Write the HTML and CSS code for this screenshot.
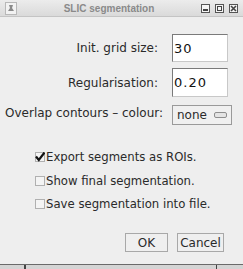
FILE: index.html
```html
<!DOCTYPE html>
<html lang="en">
<head>
<meta charset="UTF-8">
<title>SLIC segmentation</title>
<link rel="stylesheet" href="styles.css">
</head>
<body>

<div class="window">
  <div class="titlebar">
    <div class="app-icon">
      <svg width="10" height="10" viewBox="0 0 10 10">
        <path d="M3 2 L7 2 L6 5 L8 8 L2 8 L4 5 Z" fill="#8a8a8a"/>
      </svg>
    </div>
    <div class="title">SLIC segmentation</div>
    <div class="win-btns">
      <span class="win-btn"><svg width="9" height="9" viewBox="0 0 9 9"><rect x="0.5" y="0.5" width="8" height="8" fill="#f4f4f4" stroke="#555"/><rect x="2" y="5" width="5" height="2" fill="#444"/></svg></span>
      <span class="win-btn"><svg width="9" height="9" viewBox="0 0 9 9"><rect x="0.5" y="0.5" width="8" height="8" fill="#f4f4f4" stroke="#555"/><rect x="2.5" y="2.5" width="4" height="4" fill="none" stroke="#444"/></svg></span>
      <span class="win-btn"><svg width="9" height="9" viewBox="0 0 9 9"><rect x="0.5" y="0.5" width="8" height="8" fill="#f4f4f4" stroke="#555"/><path d="M2 2 L7 7 M7 2 L2 7" stroke="#444" stroke-width="1.6"/></svg></span>
    </div>
  </div>

  <div class="content">
    <div class="form">
      <label class="lbl pad">Init. grid size:</label>
      <div class="field">30</div>
      <label class="lbl pad">Regularisation:</label>
      <div class="field">0.20</div>
      <label class="lbl">Overlap contours &ndash; colour:</label>
      <div class="combo"><span>none</span><span class="combo-knob"></span></div>
    </div>

    <div class="checks">
      <div class="check"><span class="box">
        <svg width="10" height="10" viewBox="0 0 10 10"><path d="M1 4.5 L3.8 8 L9.5 0.5" fill="none" stroke="#111" stroke-width="2.2"/></svg>
      </span>Export segments as ROIs.</div>
      <div class="check"><span class="box"></span>Show final segmentation.</div>
      <div class="check"><span class="box"></span>Save segmentation into file.</div>
    </div>

    <div class="buttons">
      <button class="btn btn-ok">OK</button>
      <button class="btn btn-cancel">Cancel</button>
    </div>
  </div>
</div>

<div class="taskbar">
  <span class="tb-left"></span>
  <span class="tb-mid"></span>
  <span class="tb-right"></span>
</div>

</body>
</html>
```

FILE: styles.css
```css
* {
  box-sizing: border-box;
  margin: 0;
  padding: 0;
}

body {
  font-family: "DejaVu Sans", sans-serif;
  font-size: 12px;
  color: #2a2a2a;
  background-color: #eeeeee;
  width: 243px;
  height: 269px;
  overflow: hidden;
}

.window {
  height: 264px;
  background-color: #eeeeee;
  display: flex;
  flex-direction: column;
}

/* Barra de título */
.titlebar {
  height: 17px;
  display: flex;
  align-items: center;
  background: linear-gradient(#ececec, #dadada);
  border-bottom: 1px solid #c4c4c4;
  padding: 0 5px 0 5px;
}

.app-icon {
  width: 12px;
  height: 13px;
  border: 1px solid #b8b8b8;
  background-color: #f2f2f2;
  display: flex;
  justify-content: center;
  align-items: center;
}

.title {
  flex: 1;
  text-align: center;
  font-family: "Liberation Sans", Arial, sans-serif;
  font-weight: bold;
  font-size: 10px;
  color: #8a8a8a;
}

.win-btns {
  display: flex;
  gap: 5px;
}

.win-btn {
  display: flex;
  width: 9px;
  height: 9px;
}

/* Formulario */
.content {
  flex: 1;
  display: flex;
  flex-direction: column;
}

.form {
  display: grid;
  grid-template-columns: 163px 60px;
  grid-template-rows: 28px 29px 20px;
  row-gap: 6px;
  column-gap: 9px;
  margin-top: 17px;
  align-items: center;
}

.lbl {
  text-align: right;
  white-space: nowrap;
}

.lbl.pad {
  padding-right: 5px;
}

.field {
  width: 56px;
  height: 100%;
  background-color: #fff;
  border: 1px solid #c8c8c8;
  border-top-color: #7a7a7a;
  border-left-color: #7a7a7a;
  font-size: 13px;
  letter-spacing: 1px;
  display: flex;
  align-items: center;
  padding-left: 1px;
  color: #111;
}

.combo {
  width: 60px;
  height: 20px;
  border: 1px solid #9a9a9a;
  background-color: #f0f0f0;
  display: flex;
  align-items: center;
  justify-content: space-between;
  padding: 0 4px 0 4px;
  font-size: 12px;
  margin-top: 4px;
}

.combo-knob {
  width: 13px;
  height: 6px;
  border: 1px solid #8e8e8e;
  border-radius: 2px;
  background-color: #e4e4e4;
}

/* Casillas */
.checks {
  margin-top: 26px;
  padding-left: 35px;
  display: flex;
  flex-direction: column;
  gap: 7.5px;
}

.check {
  display: flex;
  align-items: center;
  height: 16px;
  white-space: nowrap;
  font-size: 11.7px;
}

.box {
  width: 10px;
  height: 10px;
  border: 1px solid #b0b0b0;
  background-color: #f4f4f4;
  margin-right: 1px;
  display: flex;
  overflow: visible;
}

.box svg {
  flex: none;
  margin: -1px 0 0 -1px;
}

/* Botones */
.buttons {
  margin-top: auto;
  margin-bottom: 12px;
  display: flex;
  justify-content: flex-end;
  gap: 9px;
  padding-right: 19px;
}

.btn {
  height: 19px;
  font-family: "DejaVu Sans", sans-serif;
  font-size: 12px;
  color: #2a2a2a;
  background-color: #efefef;
  border: 1px solid #a8a8a8;
  padding: 0;
}

.btn-ok {
  width: 43px;
}

.btn-cancel {
  width: 47px;
}

/* Barra inferior */
.taskbar {
  height: 5px;
  display: flex;
  border-top: 1px solid #6a6a6a;
  background-color: #d4d4d4;
}

.tb-left {
  width: 26px;
  border-right: 2px solid #444;
}

.tb-mid {
  width: 191px;
  border-right: 1px solid #444;
}
```
